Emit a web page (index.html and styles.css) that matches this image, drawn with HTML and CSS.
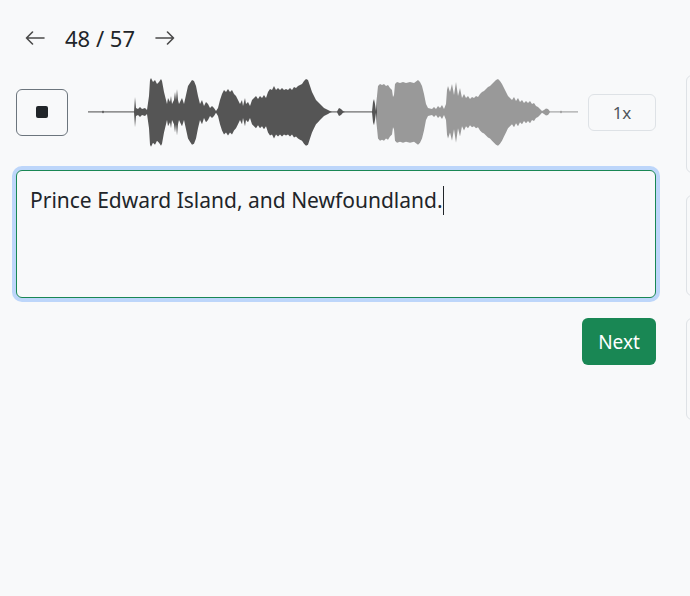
FILE: index.html
```html
<!DOCTYPE html>
<html lang="en">
<head>
<meta charset="utf-8">
<title>Transcribe</title>
<link rel="stylesheet" href="styles.css">
</head>
<body>
<div class="page">
  <main class="main">
    <nav class="nav">
      <button class="nav-arrow" aria-label="Previous">
        <svg width="20" height="14" viewBox="0 0 20 14"><path d="M19 7H1.5M7.5 1L1.5 7l6 6" fill="none" stroke="#4a4a4a" stroke-width="1.6" stroke-linecap="round" stroke-linejoin="round"/></svg>
      </button>
      <span class="counter">48 / 57</span>
      <button class="nav-arrow" aria-label="Next">
        <svg width="20" height="14" viewBox="0 0 20 14"><path d="M1 7h17.5M12.5 1l6 6-6 6" fill="none" stroke="#4a4a4a" stroke-width="1.6" stroke-linecap="round" stroke-linejoin="round"/></svg>
      </button>
    </nav>

    <div class="player">
      <button class="stop-btn" aria-label="Stop"><span class="stop-icon"></span></button>
      <svg class="wave" width="490" height="80" viewBox="88 72 490 80">
        <defs>
          <linearGradient id="prog" gradientUnits="userSpaceOnUse" x1="88" y1="0" x2="578" y2="0">
            <stop offset="0.5898" stop-color="#555555"/>
            <stop offset="0.5898" stop-color="#999999"/>
          </linearGradient>
          <path id="half" d="M88,111.5 L102,111.5 L103,110.5 L104,111.5 L134,111.5 L135,97 L136,108 L138,109 L140,107 L142,109 L145,108 L147,110 L149,96 L150,80 L151,78 L153,82 L155,80 L157,84 L159,82 L161,79 L162,81 L164,92 L166,100 L167,104 L168,98 L170,102 L171,96 L172,104 L174,100 L175,92 L176,100 L177,89 L178,100 L179,104 L181,100 L182,98 L184,104 L186,95 L188,86 L190,83 L192,80 L194,81 L196,86 L198,96 L200,104 L202,100 L204,106 L206,102 L208,104 L210,108 L212,106 L214,108 L216,111 L218,108 L220,100 L222,94 L224,90 L226,92 L228,89 L230,92 L232,90 L234,94 L236,96 L238,100 L240,104 L242,100 L243,106 L245,98 L246,104 L248,102 L250,106 L252,100 L254,98 L256,96 L258,99 L260,96 L262,98 L264,95 L266,98 L268,92 L270,89 L272,90 L274,86 L276,90 L278,88 L280,90 L282,88 L284,90 L286,89 L288,90 L290,88 L292,90 L294,87 L296,88 L298,86 L300,85 L302,84 L304,81 L306,79 L308,80 L310,86 L312,92 L314,96 L316,100 L318,102 L320,104 L322,106 L324,108 L326,109 L328,110 L330,111 L332,111.5 L337,111.5 L339,108 L341,109 L343,111 L345,111.5 L372,111.5 L373,102 L374,99 L375,104 L376,111 L377,96 L378,86 L380,84 L382,85 L384,84 L386,86 L388,85 L390,88 L392,90 L393,97 L394,95 L395,84 L397,82 L400,83 L403,82 L406,83 L410,82 L414,83 L418,80 L420,82 L422,86 L424,94 L426,104 L428,108 L432,109 L434,107 L436,109 L438,106 L440,108 L442,105 L444,109 L446,104 L447,90 L448,86 L450,92 L452,84 L454,95 L456,82 L458,96 L460,88 L462,98 L464,94 L466,98 L468,96 L470,99 L472,97 L474,98 L476,96 L478,97 L480,94 L482,92 L484,91 L486,89 L488,87 L490,86 L492,84 L494,82 L496,80 L498,79 L500,81 L502,84 L504,88 L506,92 L508,96 L510,98 L512,100 L514,97 L516,101 L518,98 L520,102 L522,100 L524,103 L526,101 L528,103 L530,101 L532,104 L534,103 L536,106 L538,107 L540,109 L542,111 L544,110 L546,108.5 L548,109 L550,111.5 L560,111.5 L561,110.5 L562,111.5 L578,111.5 L578,112.2 L88,112.2 Z"/>
        </defs>
        <use href="#half" fill="url(#prog)"/>
        <use href="#half" fill="url(#prog)" transform="translate(0,227.2) scale(1,-1.03)"/>
      </svg>
      <button class="rate-btn">1x</button>
    </div>

    <div class="editor" role="textbox" aria-multiline="true">Prince Edward Island, and Newfoundland.<span class="caret"></span></div>

    <div class="actions">
      <button class="next-btn">Next</button>
    </div>
  </main>

  <aside class="side">
    <div class="card card-a"></div>
    <div class="card card-b"></div>
    <div class="card card-c"></div>
  </aside>
</div>
</body>
</html>
```

FILE: styles.css
```css
* { box-sizing: border-box; }

html, body {
  margin: 0;
  background: #f8f9fa;
  overflow: hidden;
}

body {
  font-family: "Noto Sans", "Open Sans", sans-serif;
  color: #212529;
}

button {
  font-family: inherit;
  cursor: pointer;
}

.page {
  display: flex;
  gap: 30px;
  padding: 20px 0 0 16px;
  width: 1000px;
}

.main {
  width: 640px;
  flex: none;
}

.nav {
  height: 36px;
  display: flex;
  align-items: center;
  padding-left: 9px;
}

.nav-arrow {
  border: 0;
  background: none;
  padding: 0;
  width: 20px;
  height: 20px;
  display: flex;
  align-items: center;
  justify-content: center;
}

.counter {
  font-size: 22px;
  margin: 0 20px 0 20px;
  color: #212529;
  line-height: 1;
}

.player {
  margin-top: 16px;
  height: 80px;
  display: flex;
  align-items: center;
}

.stop-btn {
  width: 52px;
  height: 47px;
  border: 1px solid #6c757d;
  border-radius: 6px;
  background: transparent;
  display: flex;
  align-items: center;
  justify-content: center;
  padding: 0;
  flex: none;
}

.stop-icon {
  width: 12px;
  height: 12px;
  border-radius: 2px;
  background: #212529;
}

.wave {
  margin-left: 20px;
  flex: none;
  display: block;
}

.rate-btn {
  margin-left: 10px;
  width: 68px;
  height: 37px;
  border: 1px solid #dee2e6;
  border-radius: 6px;
  background: transparent;
  color: #50565c;
  font-size: 17px;
  padding: 0;
  flex: none;
}

.editor {
  margin-top: 18px;
  height: 128px;
  border: 1px solid #198754;
  border-radius: 6px;
  box-shadow: 0 0 0 4px rgba(13, 110, 253, 0.25);
  padding: 14px 13px;
  font-size: 21px;
  line-height: 30px;
  color: #212529;
  background: #f8f9fa;
}

.caret {
  display: inline-block;
  width: 1.5px;
  height: 29px;
  background: #212529;
  vertical-align: -7px;
}

.actions {
  margin-top: 20px;
  display: flex;
  justify-content: flex-end;
}

.next-btn {
  width: 74px;
  height: 47px;
  border: 0;
  border-radius: 6px;
  background: #198754;
  color: #fff;
  font-size: 19px;
  padding: 0;
}

.side {
  width: 300px;
  flex: none;
  padding-top: 55px;
  display: flex;
  flex-direction: column;
  gap: 22px;
}

.card {
  border: 1px solid #dee2e6;
  border-radius: 6px;
}

.card-a { height: 98px; }
.card-b { height: 101px; }
.card-c { height: 102px; }
```
